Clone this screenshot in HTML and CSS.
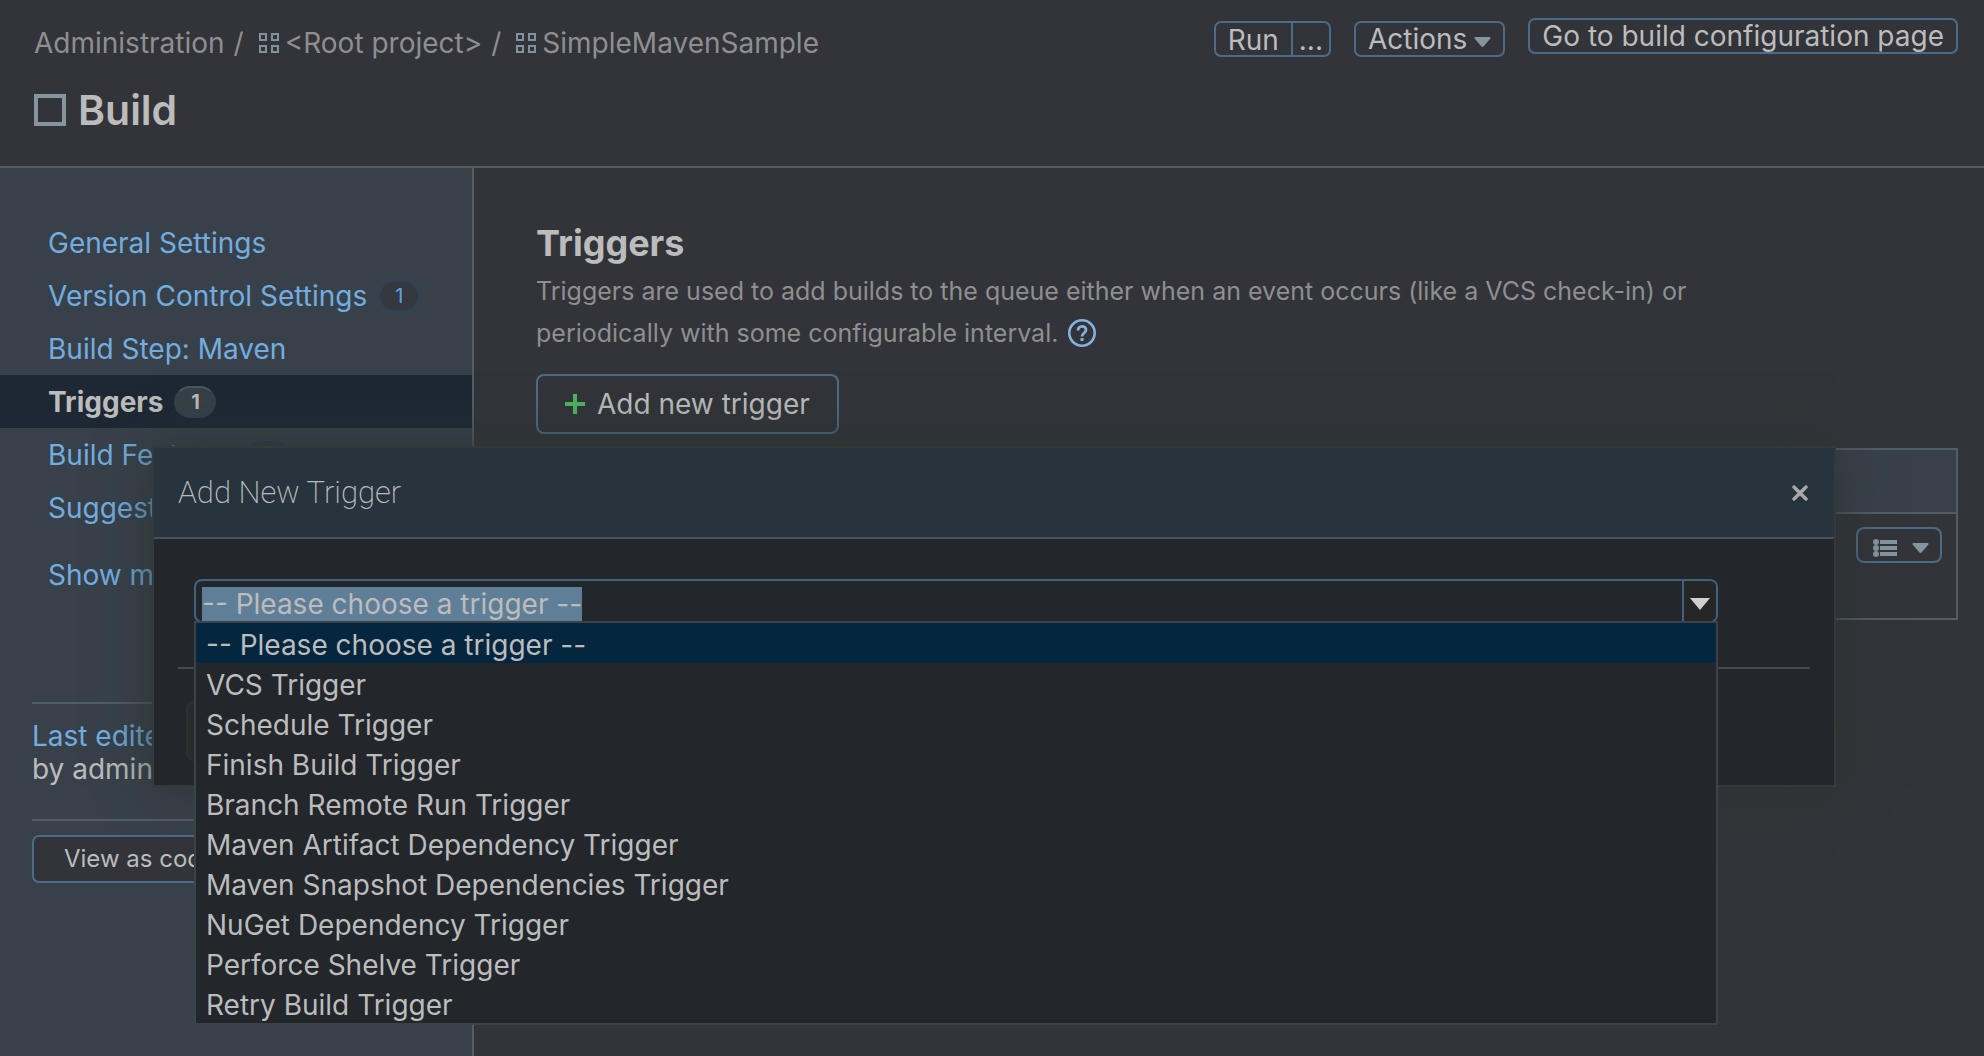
FILE: index.html
```html
<!DOCTYPE html>
<html lang="en">
<head>
<meta charset="utf-8">
<title>Build - Triggers</title>
<link rel="stylesheet" href="styles.css">
</head>
<body>
<svg class="sprite" aria-hidden="true">
  <symbol id="project" viewBox="0 0 20 20"><path d="M1 1h6v6H1zM13 1h6v6h-6zM1 13h6v6H1zM13 13h6v6h-6z" fill="none" stroke="currentColor" stroke-width="2"/></symbol>
  <symbol id="caret" viewBox="0 0 17 10"><path d="M1 0h15q1 1 0 2L9.500 9.500q-1 .8-2 0L1 2Q0 1 1 0z" fill="currentColor"/></symbol>
</svg>
<header class="header">
  <div class="heading">
    <nav class="crumbs" aria-label="Breadcrumb">
      <a href="#">Administration</a><span class="slash">/</span>
      <a href="#"><svg class="project"><use href="#project"/></svg>&lt;Root project&gt;</a><span class="slash">/</span>
      <a href="#"><svg class="project"><use href="#project"/></svg>SimpleMavenSample</a>
    </nav>
    <h1><span class="build-icon"></span>Build</h1>
  </div>
  <div class="actions">
    <div class="run"><button type="button">Run</button><button type="button" class="more">...</button></div>
    <button type="button" class="btn">Actions <svg class="caret"><use href="#caret"/></svg></button>
    <a href="#" class="btn config">Go to build configuration page</a>
  </div>
</header>
<div class="page">
  <aside class="sidebar">
    <nav class="menu" aria-label="Settings">
      <a href="#">General Settings</a>
      <a href="#">Version Control Settings<span class="count">1</span></a>
      <a href="#">Build Step: Maven</a>
      <a href="#" class="active" aria-current="page">Triggers<span class="count">1</span></a>
      <a href="#">Build Features<span class="count">0</span></a>
      <a href="#">Suggestions</a>
      <a href="#" class="show-more">Show more »</a>
    </nav>
    <div class="edited"><a href="#">Last edited</a><br>by admin</div>
    <div class="code"><button type="button">View as code</button></div>
  </aside>
  <main class="main">
    <h2>Triggers</h2>
    <p>Triggers are used to add builds to the queue either when an event occurs (like a VCS check-in) or<br>periodically with some configurable interval.
      <a href="#" class="help" aria-label="Help"><svg viewBox="0 0 28 28"><circle cx="14" cy="14" r="12.700" fill="none" stroke="currentColor" stroke-width="2.600"/><path d="M10 11.500c0-5.500 8-5.500 8-.5 0 3-4 3-4 6.500" fill="none" stroke="currentColor" stroke-width="2.800"/><path d="M12.500 19h3v3h-3z" fill="currentColor"/></svg></a></p>
    <button type="button" class="add"><svg viewBox="0 0 20 20"><path d="M8 0h4v8h8v4h-8v8H8v-8H0V8h8z" fill="currentColor"/></svg>Add new trigger</button>
    <table class="triggers">
      <thead><tr><th></th></tr></thead>
      <tbody><tr><td><button type="button" class="row-menu" aria-label="Trigger actions"><svg class="list" viewBox="0 0 24 18"><g fill="currentColor"><circle cx="3" cy="3" r="3"/><circle cx="3" cy="9" r="3"/><circle cx="3" cy="15" r="3"/><path d="M7 1h17v4H7zM7 7h17v4H7zM7 13h17v4H7z"/></g></svg><svg class="caret"><use href="#caret"/></svg></button></td></tr></tbody>
    </table>
  </main>
</div>
<div class="dialog" role="dialog" aria-labelledby="dialog-title">
  <div class="dialog-head">
    <h3 id="dialog-title">Add New Trigger</h3>
    <button type="button" class="close" aria-label="Close"><svg viewBox="0 0 16 16"><path d="M2 2l12 12M14 2L2 14" stroke="currentColor" stroke-width="3.400" stroke-linecap="round"/></svg></button>
  </div>
  <div class="dialog-body">
    <div class="combo">
      <input id="trigger" type="text" role="combobox" aria-label="Trigger" aria-expanded="true" aria-controls="options" value="-- Please choose a trigger --" spellcheck="false" autofocus>
      <button type="button" aria-label="Toggle list"><svg viewBox="0 0 20 12"><path d="M0 0h20L10 12z" fill="currentColor"/></svg></button>
      <ul id="options" class="options" role="listbox">
        <li role="option" aria-selected="true">-- Please choose a trigger --</li>
        <li role="option">VCS Trigger</li>
        <li role="option">Schedule Trigger</li>
        <li role="option">Finish Build Trigger</li>
        <li role="option">Branch Remote Run Trigger</li>
        <li role="option">Maven Artifact Dependency Trigger</li>
        <li role="option">Maven Snapshot Dependencies Trigger</li>
        <li role="option">NuGet Dependency Trigger</li>
        <li role="option">Perforce Shelve Trigger</li>
        <li role="option">Retry Build Trigger</li>
      </ul>
    </div>
    <div class="dialog-foot"><button type="button" class="save" disabled>Save</button></div>
  </div>
</div>
<script src="app.js"></script>
</body>
</html>
```
FILE: styles.css
```css
* { box-sizing: border-box; }
body {
  margin: 0;
  min-height: 100vh;
  display: flex;
  flex-direction: column;
  position: relative;
  overflow: hidden;
  background: #323439;
  color: #bcbcbc;
  font: 28px/34px Inter, "Liberation Sans", sans-serif;
}
a { color: #73ade0; text-decoration: none; }
button, input { font: inherit; color: inherit; margin: 0; padding: 0; background: none; border: 0; }
h1, h2, h3, p, ul { margin: 0; padding: 0; }
svg { display: block; flex: none; }
.sprite { position: absolute; width: 0; height: 0; }

.header {
  display: flex;
  justify-content: space-between;
  align-items: flex-start;
  height: 168px;
  padding: 18px 26px 0 34px;
  border-bottom: 2px solid #535d64;
}
.heading { padding-top: 8px; }
.crumbs { display: flex; align-items: center; }
.crumbs a { display: flex; align-items: center; gap: 6px; color: #8f8f8f; }
.slash { margin: 0 15px 0 9px; color: #8f8f8f; }
.project { width: 20px; height: 20px; color: #7f929d; }
h1 { display: flex; align-items: center; gap: 12px; margin-top: 28px; font-size: 41px; line-height: 44px; font-weight: 600; }
.build-icon { width: 32px; height: 32px; border: 4px solid #84959f; }

.actions { display: flex; gap: 23px; align-items: flex-start; }
.run, .btn {
  display: flex;
  align-items: center;
  height: 36px;
  margin-top: 3px;
  border: 2px solid #4b6c88;
  border-radius: 7px;
}
.run { align-items: stretch; }
.run button { padding: 0 12px; line-height: 34px; }
.run .more { padding: 0 6px; border-left: 2px solid #4b6c88; }
.btn { gap: 7px; padding: 0 12px; color: #bcbcbc; line-height: 36px; }
.config { margin-top: 0; }
.caret { width: 17px; height: 10px; color: #84959f; }
.btn .caret { margin-top: 5px; }

.page { flex: 1; display: flex; }
.sidebar { width: 474px; flex: none; padding-top: 48px; background: #38414a; border-right: 2px solid #535d64; }
.menu a { display: flex; align-items: center; height: 53px; padding: 1px 0 0 48px; }
.menu .active { background: #1d2834; color: #bcbcbc; font-weight: 700; }
.menu .show-more { margin-top: 14px; }
.count {
  width: 42px;
  margin-left: 11px;
  border: 2px solid #2d435c;
  border-radius: 16px;
  background: #35383f;
  color: #5da3e4;
  font-size: 20px;
  line-height: 28px;
  text-align: center;
}
.active .count { background: #364047; color: #bcbcbc; border-color: #4b555c #364047 #2a4059; }
.edited { margin: 101px 32px 0; padding: 16px 0 31px; height: 117px; border-top: 2px solid #535d64; line-height: 33px; }
.code { margin: 0 32px; padding-top: 14px; border-top: 2px solid #535d64; }
.code button { height: 48px; padding: 0 30px; border: 2px solid #4b6c88; border-radius: 7px; background: #323439; font-size: 24px; }

.main { flex: 1; padding: 51px 26px 0 62px; }
h2 { margin-bottom: 3px; font-size: 36px; line-height: 48px; font-weight: 700; }
p { margin-bottom: 20px; color: #8f8f8f; font-size: 25px; line-height: 42px; }
.help { display: inline-block; margin-left: 3px; vertical-align: -5px; }
.help svg { width: 28px; height: 28px; color: #83b2da; }
.add { display: flex; align-items: center; gap: 12px; height: 60px; padding: 0 27px; border: 2px solid #4b6c88; border-radius: 8px; }
.add svg { width: 20px; height: 20px; color: #4db462; }
.triggers { width: 100%; margin-top: 14px; border-collapse: collapse; }
.triggers th, .triggers td { padding: 0; border: 2px solid #535d64; }
.triggers th { height: 64px; background: #38414a; }
.triggers td { height: 106px; padding: 13px 14px; vertical-align: top; }
.row-menu { display: flex; align-items: center; gap: 15px; width: 86px; height: 36px; margin-left: auto; padding: 6px 0 0 15px; border: 2px solid #4b6c88; border-radius: 8px; color: #84959f; }
.list { width: 24px; height: 18px; }

.dialog {
  position: absolute;
  top: 446px;
  left: 152px;
  right: 148px;
  border: 2px solid #35393c;
  background: #23262b;
  box-shadow: 0 0 50px rgba(42, 52, 48, .9);
}
.dialog-head { display: flex; align-items: center; justify-content: space-between; height: 91px; padding: 0 26px 0 24px; background: #27343d; border-bottom: 2px solid #475159; }
h3 { font-family: Roboto, Inter, sans-serif; font-size: 31px; line-height: 40px; font-weight: 200; }
.close svg { width: 16px; height: 16px; color: #a9a9a9; }
.dialog-body { padding: 40px 24px 24px; }
.combo { position: relative; display: flex; height: 44px; margin: 0 92px 0 16px; border: 2px solid #41627e; border-radius: 8px; }
.combo input { flex: 1; min-width: 0; height: 34px; margin-top: 6px; padding-left: 6px; outline: 0; }
.combo input::selection { background: #5f7f98; color: #bcbcbc; }
.combo button { display: flex; align-items: center; justify-content: center; width: 34px; padding-top: 6px; border-left: 2px solid #41627e; background: #262626; border-radius: 0 6px 6px 0; }
.combo button svg { width: 20px; height: 12px; color: #d0d0d0; }
.options { position: absolute; z-index: 1; top: 40px; left: -2px; right: -2px; list-style: none; background: #23262b; border: 2px solid #3b4349; }
.options li { height: 40px; padding: 2px 0 0 10px; line-height: 40px; }
.options li[aria-selected] { background: #05263f; }
.dialog-foot { margin-top: 44px; padding: 32px 8px 0; border-top: 2px solid #414b52; }
.save { height: 60px; padding: 0 28px; border: 2px solid #303030; border-radius: 8px; background: #292b2e; }
```
FILE: app.js
```js
const field = document.getElementById("trigger");
field.focus();
field.select();
```
